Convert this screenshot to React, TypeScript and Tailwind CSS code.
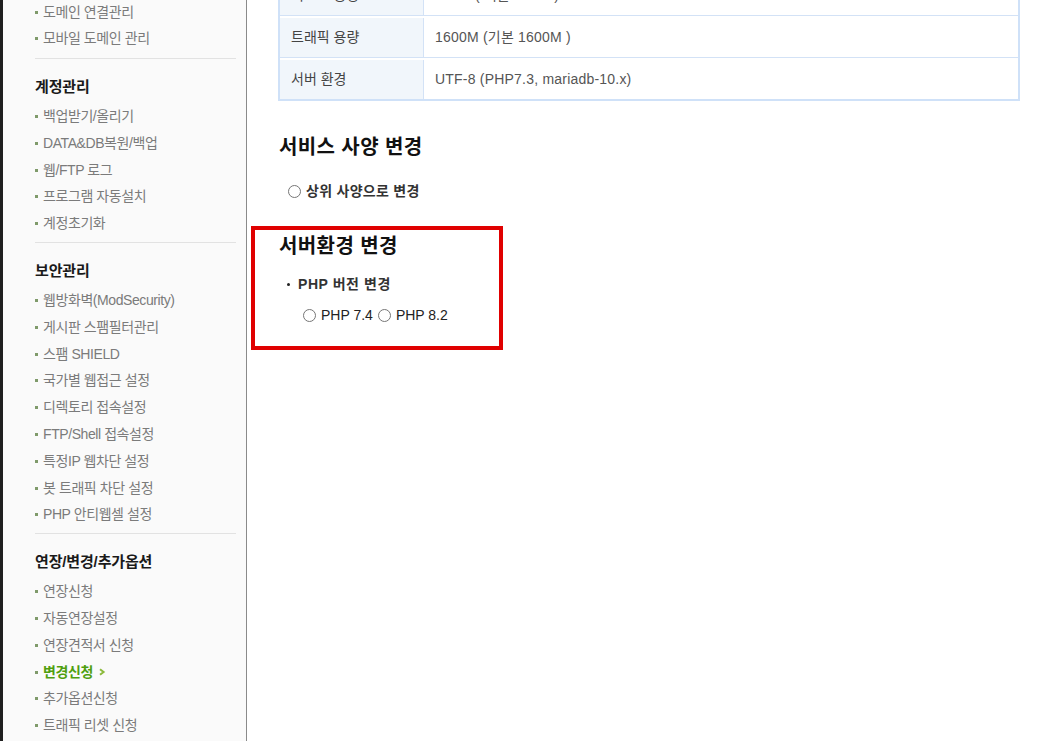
import React from 'react';

const FONT = { fontFamily: '"Liberation Sans", "Noto Sans CJK KR", sans-serif' };

interface MenuItem {
  label: string;
  active?: boolean;
}

interface MenuSection {
  title?: string;
  items: MenuItem[];
}

const sections: MenuSection[] = [
  { items: [{ label: '도메인 연결관리' }, { label: '모바일 도메인 관리' }] },
  {
    title: '계정관리',
    items: [
      { label: '백업받기/올리기' },
      { label: 'DATA&DB복원/백업' },
      { label: '웹/FTP 로그' },
      { label: '프로그램 자동설치' },
      { label: '계정초기화' },
    ],
  },
  {
    title: '보안관리',
    items: [
      { label: '웹방화벽(ModSecurity)' },
      { label: '게시판 스팸필터관리' },
      { label: '스팸 SHIELD' },
      { label: '국가별 웹접근 설정' },
      { label: '디렉토리 접속설정' },
      { label: 'FTP/Shell 접속설정' },
      { label: '특정IP 웹차단 설정' },
      { label: '봇 트래픽 차단 설정' },
      { label: 'PHP 안티웹셀 설정' },
    ],
  },
  {
    title: '연장/변경/추가옵션',
    items: [
      { label: '연장신청' },
      { label: '자동연장설정' },
      { label: '연장견적서 신청' },
      { label: '변경신청', active: true },
      { label: '추가옵션신청' },
      { label: '트래픽 리셋 신청' },
    ],
  },
];

// page is scrolled, so the first row sits partly above the top edge
const rows = [
  { label: '디스크 용량', value: '700M ( 기본 700M )' },
  { label: '트래픽 용량', value: '1600M (기본 1600M )' },
  { label: '서버 환경', value: 'UTF-8 (PHP7.3, mariadb-10.x)' },
];

function Radio() {
  return <span className="inline-block h-[13px] w-[13px] shrink-0 rounded-full border border-[#767676] bg-white" />;
}

function Sidebar() {
  return (
    <aside className="w-[244px] shrink-0 border-r border-[#8a8a8a] bg-[#fafafa] pl-[32px] pr-[10px]">
      {sections.map((section, i) => (
        <div
          key={i}
          className={i === 0 ? '-mt-[1.4px] border-b border-[#e2e2e2] pb-[6px]' : 'border-b border-[#e2e2e2] pb-[5px] last:border-b-0'}
        >
          {section.title && (
            <h3 className="mt-[14px] h-[30px] text-[15px] font-bold leading-[28px] tracking-[-0.01em] text-[#1a1a1a]">
              {section.title}
            </h3>
          )}
          <ul>
            {section.items.map((item) => (
              <li key={item.label} className="flex h-[26.8px] items-center">
                <span className="mr-[5px] h-[3px] w-[3px] bg-[#7f9a6a]" />
                {item.active ? (
                  <span className="flex items-center text-[14px] font-bold tracking-[-0.03em] text-[#4f9f0f]">
                    변경신청
                    <svg viewBox="0 0 8 8" className="ml-[5px] h-[8px] w-[8px]">
                      <path d="M2 1.2 L5.6 4 L2 6.8" fill="none" stroke="#8cba3c" strokeWidth="2" />
                    </svg>
                  </span>
                ) : (
                  <span className="text-[14px] tracking-[-0.03em] text-[#7b7b7b]">{item.label}</span>
                )}
              </li>
            ))}
          </ul>
        </div>
      ))}
    </aside>
  );
}

export default function App() {
  return (
    <div className="flex h-[741px] w-[1047px] overflow-hidden bg-white" style={FONT}>
      <div className="w-[3px] shrink-0 bg-[#1f1f1f]" />
      <Sidebar />
      <main className="flex-1 pl-[31px]">
        <div className="-mt-[29px] w-[742px] border-2 border-[#cfe1f8]">
          {rows.map((row, i) => (
            <div key={row.label} className={`flex h-[42px] pt-[2px] ${i > 0 ? 'border-t border-[#d3e2f6]' : ''}`}>
              <div className="flex w-[144px] items-center border-r border-[#d3e2f6] bg-[#f1f6fb] pl-[11px] text-[14px] text-[#444]">
                {row.label}
              </div>
              <div className="flex flex-1 items-center pl-[11px] text-[14px] tracking-[0.015em] text-[#555]">{row.value}</div>
            </div>
          ))}
        </div>

        <h2 className="mt-[32px] h-[28px] pl-px text-[20px] font-bold leading-[28px] tracking-[0.02em] text-[#111]">
          서비스 사양 변경
        </h2>
        <label className="mt-[20px] flex h-[20px] items-center gap-[5px] pl-[10px] text-[14px] font-bold tracking-[0.02em] text-[#333]">
          <Radio />
          상위 사양으로 변경
        </label>

        <section className="relative mt-[31px]">
          <h2 className="h-[28px] pl-px text-[20px] font-bold leading-[28px] tracking-[0.02em] text-[#111]">
            서버환경 변경
          </h2>
          <div className="mt-[14px] flex h-[20px] items-center pl-[9px] text-[14px] font-bold tracking-[0.04em] text-[#333]">
            <span className="mr-[8px] h-[3px] w-[3px] rounded-full bg-[#222]" />
            PHP 버전 변경
          </div>
          <div className="mt-[11px] flex h-[20px] items-center gap-[5px] pl-[25px] text-[14px] text-[#222]">
            <Radio />
            <span>PHP 7.4</span>
            <Radio />
            <span>PHP 8.2</span>
          </div>
          <div className="pointer-events-none absolute -left-[27px] -top-[6px] h-[124px] w-[252px] border-4 border-[#e00000]" />
        </section>
      </main>
    </div>
  );
}
